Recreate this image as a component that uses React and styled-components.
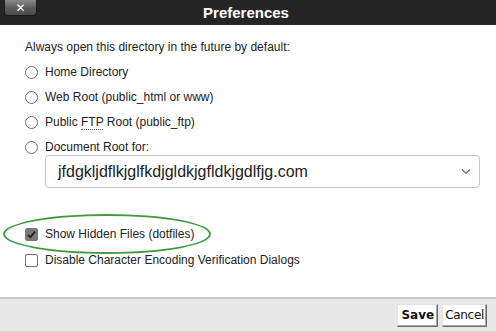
import React from "react";
import styled, { createGlobalStyle } from "styled-components";

const GlobalReset = createGlobalStyle`
  *, *::before, *::after { box-sizing: border-box; margin: 0; padding: 0; }
  html, body { width: 496px; height: 332px; overflow: hidden; background: #fff; }
  body { font-family: "Liberation Sans", Arial, sans-serif; color: #222; }
`;

const Dialog = {
  Wrapper: styled.div`
    width: 496px;
    height: 332px;
    display: flex;
    flex-direction: column;
    background: #fff;
  `,
  TitleBar: styled.header`
    height: 25px;
    background: #252525;
    display: grid;
    grid-template-columns: 1fr auto 1fr;
    align-items: start;
    padding-left: 4px;
  `,
  Close: styled.button`
    width: 33px;
    height: 16px;
    border: 1px solid #1a1a1a;
    border-top: none;
    border-radius: 0 0 4px 4px;
    background: linear-gradient(#8a8a8a, #5a5a5a 55%, #4a4a4a);
    color: #fff;
    font: bold 12px/14px "DejaVu Sans", sans-serif;
    display: flex;
    align-items: center;
    justify-content: center;
    justify-self: start;
  `,
  Title: styled.h1`
    font: bold 15px/25px "Liberation Sans", Arial, sans-serif;
    color: #fff;
    transform: translateX(-4px);
  `,
  Body: styled.main`
    flex: 1;
    padding: 14px 16px 0 25px;
    display: flex;
    flex-direction: column;
    font-size: 12px;
  `,
  Footer: styled.footer`
    height: 35px;
    background: #e8e8e8;
    border-top: 2px solid #c9c9c9;
    border-bottom: 1px solid #d6d6d6;
    display: flex;
    justify-content: flex-end;
    align-items: center;
    gap: 4px;
    padding: 0 9px 0 0;
  `,
};

const Intro = styled.p`
  line-height: 16px;
  margin-bottom: 9px;
`;

const Row = styled.label`
  display: flex;
  align-items: center;
  gap: 7px;
  height: 16px;
  margin-bottom: ${(p) => p.$gap ?? 9}px;
  line-height: 16px;
`;

const Radio = styled.span`
  width: 13px;
  height: 13px;
  border: 1px solid #6f6f6f;
  border-radius: 50%;
  background: #fff;
  flex: none;
`;

const Box = styled.span`
  width: 13px;
  height: 13px;
  border: 1px solid ${(p) => (p.$checked ? "#7a7a7a" : "#6f6f6f")};
  border-radius: 2px;
  background: ${(p) => (p.$checked ? "#7a7a7a" : "#fff")};
  flex: none;
  display: flex;
  align-items: center;
  justify-content: center;
`;

const Abbr = styled.abbr`
  text-decoration: none;
  border-bottom: 1px dotted #555;
`;

const Select = styled.div`
  margin: 0 0 38px 20px;
  height: 33px;
  border: 1px solid #c4c4c4;
  border-radius: 4px;
  display: flex;
  align-items: center;
  justify-content: space-between;
  padding: 0 8px 0 12px;
  font-size: 16px;
  color: #222;
`;

const Highlight = styled.div`
  position: relative;
`;

const Ellipse = styled.span`
  position: absolute;
  left: -22px;
  top: -12px;
  width: 208px;
  height: 40px;
  border: 2px solid #3f9b3f;
  border-radius: 50%;
  pointer-events: none;
`;

const Button = styled.button`
  height: 23px;
  background: #fff;
  border: 1px solid;
  border-color: #e4e4e4 #6a6a6a #6a6a6a #e4e4e4;
  box-shadow: inset -1px -1px 0 #a8a8a8;
  font: ${(p) => (p.$primary ? "bold" : "normal")} 12px "DejaVu Sans", Verdana, sans-serif;
  color: #111;
  padding: 0 ${(p) => (p.$primary ? 3 : 2)}px;
  letter-spacing: ${(p) => (p.$primary ? "0" : "-0.3px")};
`;

const Check = () => (
  <svg width="11" height="11" viewBox="0 0 11 11">
    <path d="M2 5.8 L4.4 8.2 L9 2.6" fill="none" stroke="#1e1e1e" strokeWidth="1.8" />
  </svg>
);

const Chevron = () => (
  <svg width="10" height="7" viewBox="0 0 10 7">
    <path d="M1 1.5 L5 5.2 L9 1.5" fill="none" stroke="#666" strokeWidth="1.2" />
  </svg>
);

const options = [
  { label: "Home Directory" },
  { label: "Web Root (public_html or www)" },
  {
    label: (
      <>
        Public <Abbr>FTP</Abbr> Root (public_ftp)
      </>
    ),
  },
  { label: "Document Root for:", gap: 0 },
];

export default function App() {
  return (
    <Dialog.Wrapper>
      <GlobalReset />
      <Dialog.TitleBar>
        <Dialog.Close>✕</Dialog.Close>
        <Dialog.Title>Preferences</Dialog.Title>
        <span />
      </Dialog.TitleBar>
      <Dialog.Body>
        <Intro>Always open this directory in the future by default:</Intro>
        {options.map((o, i) => (
          <Row key={i} $gap={o.gap}>
            <Radio />
            <span>{o.label}</span>
          </Row>
        ))}
        <Select>
          jfdgkljdflkjglfkdjgldkjgfldkjgdlfjg.com
          <Chevron />
        </Select>
        <Highlight>
          <Ellipse />
          <Row $gap={10}>
            <Box $checked>
              <Check />
            </Box>
            <span>Show Hidden Files (dotfiles)</span>
          </Row>
        </Highlight>
        <Row>
          <Box />
          <span>Disable Character Encoding Verification Dialogs</span>
        </Row>
      </Dialog.Body>
      <Dialog.Footer>
        <Button $primary>Save</Button>
        <Button>Cancel</Button>
      </Dialog.Footer>
    </Dialog.Wrapper>
  );
}
